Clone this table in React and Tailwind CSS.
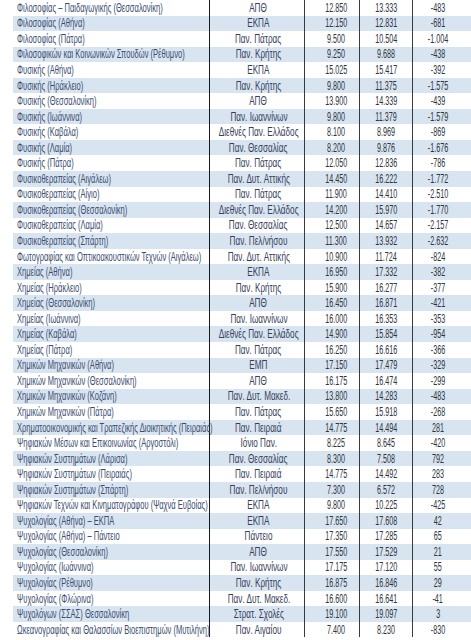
import React from "react";

const rows = [
  ["Φιλοσοφίας – Παιδαγωγικής (Θεσσαλονίκη)", "ΑΠΘ", "12.850", "13.333", "-483"],
  ["Φιλοσοφίας (Αθήνα)", "ΕΚΠΑ", "12.150", "12.831", "-681"],
  ["Φιλοσοφίας (Πάτρα)", "Παν. Πάτρας", "9.500", "10.504", "-1.004"],
  ["Φιλοσοφικών και Κοινωνικών Σπουδών (Ρέθυμνο)", "Παν. Κρήτης", "9.250", "9.688", "-438"],
  ["Φυσικής (Αθήνα)", "ΕΚΠΑ", "15.025", "15.417", "-392"],
  ["Φυσικής (Ηράκλειο)", "Παν. Κρήτης", "9.800", "11.375", "-1.575"],
  ["Φυσικής (Θεσσαλονίκη)", "ΑΠΘ", "13.900", "14.339", "-439"],
  ["Φυσικής (Ιωάννινα)", "Παν. Ιωαννίνων", "9.800", "11.379", "-1.579"],
  ["Φυσικής (Καβάλα)", "Διεθνές Παν. Ελλάδος", "8.100", "8.969", "-869"],
  ["Φυσικής (Λαμία)", "Παν. Θεσσαλίας", "8.200", "9.876", "-1.676"],
  ["Φυσικής (Πάτρα)", "Παν. Πάτρας", "12.050", "12.836", "-786"],
  ["Φυσικοθεραπείας (Αιγάλεω)", "Παν. Δυτ. Αττικής", "14.450", "16.222", "-1.772"],
  ["Φυσικοθεραπείας (Αίγιο)", "Παν. Πάτρας", "11.900", "14.410", "-2.510"],
  ["Φυσικοθεραπείας (Θεσσαλονίκη)", "Διεθνές Παν. Ελλάδος", "14.200", "15.970", "-1.770"],
  ["Φυσικοθεραπείας (Λαμία)", "Παν. Θεσσαλίας", "12.500", "14.657", "-2.157"],
  ["Φυσικοθεραπείας (Σπάρτη)", "Παν. Πελ/νήσου", "11.300", "13.932", "-2.632"],
  ["Φωτογραφίας και Οπτικοακουστικών Τεχνών (Αιγάλεω)", "Παν. Δυτ. Αττικής", "10.900", "11.724", "-824"],
  ["Χημείας (Αθήνα)", "ΕΚΠΑ", "16.950", "17.332", "-382"],
  ["Χημείας (Ηράκλειο)", "Παν. Κρήτης", "15.900", "16.277", "-377"],
  ["Χημείας (Θεσσαλονίκη)", "ΑΠΘ", "16.450", "16.871", "-421"],
  ["Χημείας (Ιωάννινα)", "Παν. Ιωαννίνων", "16.000", "16.353", "-353"],
  ["Χημείας (Καβάλα)", "Διεθνές Παν. Ελλάδος", "14.900", "15.854", "-954"],
  ["Χημείας (Πάτρα)", "Παν. Πάτρας", "16.250", "16.616", "-366"],
  ["Χημικών Μηχανικών (Αθήνα)", "ΕΜΠ", "17.150", "17.479", "-329"],
  ["Χημικών Μηχανικών (Θεσσαλονίκη)", "ΑΠΘ", "16.175", "16.474", "-299"],
  ["Χημικών Μηχανικών (Κοζάνη)", "Παν. Δυτ. Μακεδ.", "13.800", "14.283", "-483"],
  ["Χημικών Μηχανικών (Πάτρα)", "Παν. Πάτρας", "15.650", "15.918", "-268"],
  ["Χρηματοοικονομικής και Τραπεζικής Διοικητικής (Πειραιάς)", "Παν. Πειραιά", "14.775", "14.494", "281"],
  ["Ψηφιακών Μέσων και Επικοινωνίας (Αργοστόλι)", "Ιόνιο Παν.", "8.225", "8.645", "-420"],
  ["Ψηφιακών Συστημάτων (Λάρισα)", "Παν. Θεσσαλίας", "8.300", "7.508", "792"],
  ["Ψηφιακών Συστημάτων (Πειραιάς)", "Παν. Πειραιά", "14.775", "14.492", "283"],
  ["Ψηφιακών Συστημάτων (Σπάρτη)", "Παν. Πελ/νήσου", "7.300", "6.572", "728"],
  ["Ψηφιακών Τεχνών και Κινηματογράφου (Ψαχνά Ευβοίας)", "ΕΚΠΑ", "9.800", "10.225", "-425"],
  ["Ψυχολογίας (Αθήνα) – ΕΚΠΑ", "ΕΚΠΑ", "17.650", "17.608", "42"],
  ["Ψυχολογίας (Αθήνα) – Πάντειο", "Πάντειο", "17.350", "17.285", "65"],
  ["Ψυχολογίας (Θεσσαλονίκη)", "ΑΠΘ", "17.550", "17.529", "21"],
  ["Ψυχολογίας (Ιωάννινα)", "Παν. Ιωαννίνων", "17.175", "17.120", "55"],
  ["Ψυχολογίας (Ρέθυμνο)", "Παν. Κρήτης", "16.875", "16.846", "29"],
  ["Ψυχολογίας (Φλώρινα)", "Παν. Δυτ. Μακεδ.", "16.600", "16.641", "-41"],
  ["Ψυχολόγων (ΣΣΑΣ) Θεσσαλονίκη", "Στρατ. Σχολές", "19.100", "19.097", "3"],
  ["Ωκεανογραφίας και Θαλασσίων Βιοεπιστημών (Μυτιλήνη)", "Παν. Αιγαίου", "7.400", "8.230", "-830"],
];

function Num({ children, className }) {
  return (
    <div className={"flex items-center justify-center h-full shrink-0 border-l border-[#3a3a3a] text-[#2f3441] " + className}>
      <span className="inline-block shrink-0 whitespace-nowrap scale-x-[0.6] origin-center">{children}</span>
    </div>
  );
}

export default function App() {
  return (
    <div
      className="w-[471px] h-[640px] bg-white overflow-hidden pl-[13px] text-[12px] leading-none"
      style={{ fontFamily: '"Liberation Sans", Arial, sans-serif' }}
    >
      {rows.map((r, i) => (
        <div
          key={i}
          className={
            i % 2 === 1
              ? "flex h-[15.55px] bg-[#d8e4f0]"
              : "flex h-[15.55px] bg-white"
          }
        >
          <div className="w-[196px] shrink-0 flex items-center pl-[4px] text-[#3b4c70]">
            <span className="inline-block shrink-0 whitespace-nowrap scale-x-[0.63] origin-left">{r[0]}</span>
          </div>
          <div className="w-[95px] shrink-0 flex items-center justify-center h-full border-l-[1.5px] border-[#1a1a1a] text-[#37405a] pl-[3px]">
            <span className="inline-block shrink-0 whitespace-nowrap scale-x-[0.68] origin-center">{r[1]}</span>
          </div>
          <Num className="w-[55px] pl-[8px]">{r[2]}</Num>
          <Num className="w-[53px]">{r[3]}</Num>
          <Num className="flex-1 pr-[8px]">{r[4]}</Num>
        </div>
      ))}
    </div>
  );
}
